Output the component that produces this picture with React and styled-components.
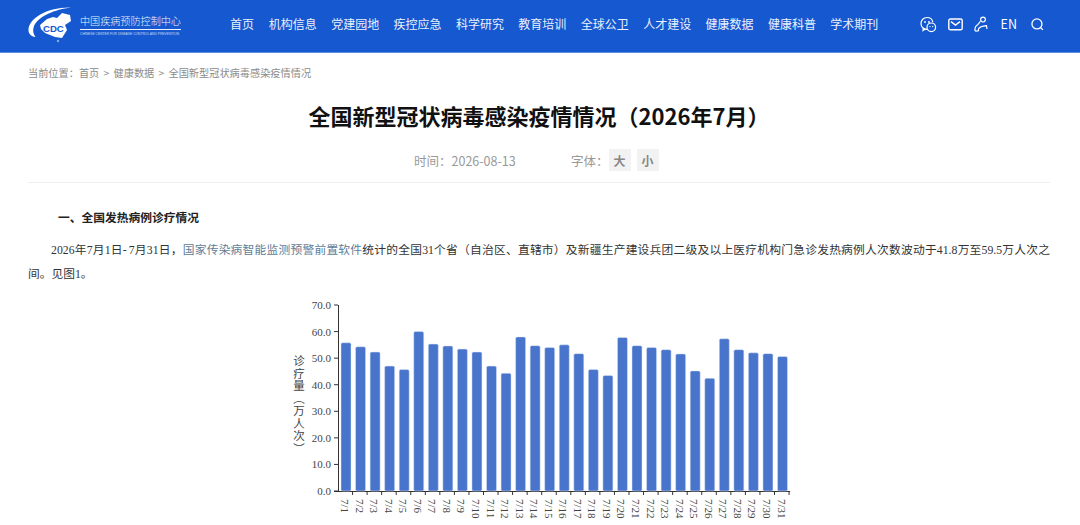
import React from "react";
import styled, { createGlobalStyle } from "styled-components";

const GlobalStyle = createGlobalStyle`
  html, body {
    margin: 0;
    padding: 0;
    height: 525px;
    overflow: hidden;
    background: #fff;
    font-family: "Noto Sans CJK SC", "Liberation Sans", sans-serif;
  }
  * { box-sizing: border-box; }
`;

const Header = styled.header`
  height: 53px;
  background: #1558d0;
  border-bottom: 1px solid #5c8ce0;
  display: flex;
  align-items: center;
  padding: 0 36px 4px 27px;
`;
const LogoWrap = styled.div`
  width: 154px;
  height: 48px;
  flex: none;
  display: flex;
  align-items: flex-start;
`;
const LogoText = styled.div`
  margin: 14px 0 0 -1px;
  color: #fff;
  white-space: nowrap;
`;
const LogoCn = styled.div`
  font-size: 10.1px;
  line-height: 14px;
  font-weight: 300;
  padding-bottom: 1px;
  border-bottom: 1px solid #fff;
  width: 101px;
  opacity: 0.92;
`;
const LogoEn = styled.div`
  font-family: "Liberation Sans", sans-serif;
  font-size: 3.3px;
  line-height: 9px;
  width: 101px;
  opacity: 0.75;
`;
const Nav = styled.nav`
  margin-left: 49px;
  display: flex;
  gap: 14.8px;
  flex: 1;
`;
const NavItem = styled.a`
  color: #eaf0fc;
  font-size: 12px;
  line-height: 16px;
  white-space: nowrap;
  width: ${(p) => p.$w}px;
`;
const Tools = styled.div`
  display: flex;
  align-items: center;
  gap: 11px;
  color: #fff;
`;
const Lang = styled.span`
  font-size: 12.5px;
  line-height: 16px;
  margin: 0 3px 0 2px;
`;

const Main = styled.main`
  padding: 0 30px 0 28px;
`;
const Crumb = styled.div`
  padding-top: 13px;
  font-size: 10.2px;
  line-height: 14px;
  color: #8b8b8b;
  word-spacing: 2px;
`;
const Title = styled.h1`
  margin: 19px 0 0;
  text-align: center;
  font-size: 22px;
  line-height: 32px;
  font-weight: 700;
  color: #111;
`;
const Meta = styled.div`
  margin-top: 18px;
  height: 34px;
  padding: 0 0 11px 386px;
  display: flex;
  align-items: center;
  font-size: 12.5px;
  color: #999;
  border-bottom: 1px solid #eee;
`;
const MetaTime = styled.span`
  width: 157px;
`;
const SizeBtn = styled.span`
  width: 22px;
  height: 22px;
  margin-left: ${(p) => p.$ml}px;
  background: #f2f2f2;
  color: #888;
  font-size: 12px;
  font-weight: 700;
  display: flex;
  align-items: center;
  justify-content: center;
`;
const Article = styled.article`
  font-family: "Liberation Serif", "Noto Sans CJK SC", serif;
  color: #333;
  font-size: 11.75px;
  line-height: 24px;
`;
const SectionHead = styled.p`
  margin: 24px 0 0;
  padding-left: 30px;
  font-weight: 700;
  color: #222;
`;
const Para = styled.p`
  margin: 8px 0 0;
  text-indent: 23px;
  text-align: justify;
`;
const Mention = styled.span`
  color: #5f7d96;
`;
const Dash = styled.span`
  letter-spacing: 2px;
`;
const ChartWrap = styled.div`
  margin-top: 9px;
  display: flex;
  justify-content: center;
  padding-left: 22px;
`;

const navItems = ["首页", "机构信息", "党建园地", "疾控应急", "科学研究", "教育培训", "全球公卫", "人才建设", "健康数据", "健康科普", "学术期刊"];

const values = [55.8, 54.3, 52.3, 47, 45.7, 60, 55.3, 54.6, 53.4, 52.3, 47, 44.3, 58, 54.7, 54, 55, 51.7, 45.7, 43.5, 57.8, 54.7, 54, 53.2, 51.6, 45.2, 42.4, 57.3, 53.2, 52, 51.7, 50.6];

const Logo = () => (
  <svg width="54" height="48" viewBox="0 0 54 48">
    <path d="M1.5 30C1.5 19 19 7 44 7.5C28 9.5 11.5 16 7 26C5.5 30 6 34 8.5 37C4 36.5 1.5 34 1.5 30Z" fill="#fff" />
    <path d="M13 25L20 19L26 17L30 18L35 13L43 15L44 21L38 25L40 30L35 38L28 37L18 33L14 29Z" fill="#fff" />
    <text x="16" y="31.5" fontFamily="Liberation Sans" fontWeight="700" fontSize="9.6" fill="#1558d0">CDC</text>
    <circle cx="31" cy="41" r="1.2" fill="#fff" opacity="0.5" />
  </svg>
);

const ChatIcon = () => (
  <svg width="17" height="17" viewBox="0 0 17 17" fill="none" stroke="#fff" strokeWidth="1.2">
    <path d="M7 13.4C3.5 13.4 1 11 1 7.6C1 4.2 3.6 1.5 7 1.5C10 1.5 12.4 3.4 12.8 6.2" />
    <path d="M3.4 11.8L3 14.6L5.4 13.1" />
    <circle cx="11.3" cy="11.3" r="4.3" />
    <circle cx="5" cy="6" r="0.9" fill="#fff" stroke="none" />
    <circle cx="9" cy="6" r="0.9" fill="#fff" stroke="none" />
    <circle cx="10" cy="10.6" r="0.7" fill="#fff" stroke="none" />
    <circle cx="12.8" cy="10.6" r="0.7" fill="#fff" stroke="none" />
  </svg>
);

const MailIcon = () => (
  <svg width="15" height="13" viewBox="0 0 15 13" fill="none" stroke="#fff" strokeWidth="1.4">
    <rect x="0.8" y="1" width="13.4" height="10.8" rx="1.6" />
    <path d="M3 3.6L7.5 7L12 3.6" />
  </svg>
);

const PersonIcon = () => (
  <svg width="14" height="16" viewBox="0 0 14 16" fill="none" stroke="#fff" strokeWidth="1.2">
    <circle cx="9" cy="3.6" r="2.4" />
    <path d="M1 15V12.4C1 10.6 2.4 9.6 3.6 8.8L6.4 5.4" />
    <path d="M4.5 15V12.8C5.5 11 9 10 12.5 9.6L13 13" />
    <path d="M1 15H4.5" />
  </svg>
);

const SearchIcon = () => (
  <svg width="13" height="13" viewBox="0 0 14 14" fill="none" stroke="#fff" strokeWidth="1.4">
    <circle cx="6.4" cy="6.4" r="5.4" />
    <path d="M10.2 10.2L12.8 12.8" />
  </svg>
);

const Chart = () => {
  const axisX = 48;
  const baseY = 195;
  const unit = 2.657;
  const pitch = 14.55;
  return (
    <svg width="520" height="250" viewBox="0 0 520 250">
      {[0, 10, 20, 30, 40, 50, 60, 70].map((v) => (
        <g key={v}>
          <line x1={axisX - 4} x2={axisX} y1={baseY - v * unit} y2={baseY - v * unit} stroke="#333" />
          <text x={axisX - 7} y={baseY - v * unit + 4} textAnchor="end" fontFamily="Liberation Serif" fontSize="11" fill="#444">
            {v.toFixed(1)}
          </text>
        </g>
      ))}
      <line x1={axisX + 0.5} x2={axisX + 0.5} y1={baseY - 70 * unit} y2={baseY} stroke="#333" />
      <line x1={axisX - 4} x2={axisX + pitch * 31 + 1} y1={baseY + 0.5} y2={baseY + 0.5} stroke="#333" />
      {values.map((v, i) => {
        const x = axisX + 3 + i * pitch;
        const h = v * unit;
        return (
          <g key={i}>
            <rect x={x} y={baseY - h} width="10" height={h} rx="1.5" fill="#4874cb" stroke="#dbe4f6" strokeWidth="0.5" />
            <line x1={axisX + (i + 1) * pitch} x2={axisX + (i + 1) * pitch} y1={baseY} y2={baseY + 4} stroke="#333" />
            <text
              transform={`translate(${x} ${baseY + 8}) rotate(90)`}
              fontFamily="Liberation Serif"
              fontSize="11"
              fill="#444"
            >
              {`7/${i + 1}`}
            </text>
          </g>
        );
      })}
      <text
        x="9"
        y="59"
        fontFamily="Noto Sans CJK SC"
        fontSize="11.5"
        fill="#444"
        letterSpacing="1"
        style={{ writingMode: "vertical-rl" }}
      >
        诊疗量（万人次）
      </text>
    </svg>
  );
};

const App = () => (
  <>
    <GlobalStyle />
    <Header>
      <LogoWrap>
        <Logo />
        <LogoText>
          <LogoCn>中国疾病预防控制中心</LogoCn>
          <LogoEn>CHINESE CENTER FOR DISEASE CONTROL AND PREVENTION</LogoEn>
        </LogoText>
      </LogoWrap>
      <Nav>
        {navItems.map((n) => (
          <NavItem key={n} $w={n.length === 2 ? 24 : 47.6}>{n}</NavItem>
        ))}
      </Nav>
      <Tools>
        <ChatIcon />
        <MailIcon />
        <PersonIcon />
        <Lang>EN</Lang>
        <SearchIcon />
      </Tools>
    </Header>
    <Main>
      <Crumb>当前位置：首页 &gt; 健康数据 &gt; 全国新型冠状病毒感染疫情情况</Crumb>
      <Title>全国新型冠状病毒感染疫情情况（2026年7月）</Title>
      <Meta>
        <MetaTime>时间：2026-08-13</MetaTime>
        <span>字体：</span>
        <SizeBtn $ml={0}>大</SizeBtn>
        <SizeBtn $ml={6}>小</SizeBtn>
      </Meta>
      <Article>
        <SectionHead>一、全国发热病例诊疗情况</SectionHead>
        <Para>
          2026年7月1日<Dash>-</Dash>7月31日，<Mention>国家传染病智能监测预警前置软件</Mention>统计的全国31个省（自治区、直辖市）及新疆生产建设兵团二级及以上医疗机构门急诊发热病例人次数波动于41.8万至59.5万人次之间。见图1。
        </Para>
        <ChartWrap>
          <Chart />
        </ChartWrap>
      </Article>
    </Main>
  </>
);

export default App;
